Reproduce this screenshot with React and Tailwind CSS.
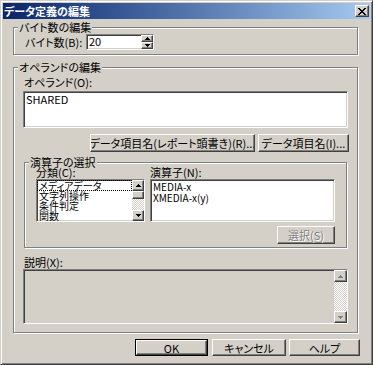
import React from "react";

const sunken =
  "border border-t-[#808080] border-l-[#808080] border-r-white border-b-white shadow-[inset_1px_1px_0_#404040,inset_-1px_-1px_0_#d4d0c8]";
const raised =
  "border border-t-white border-l-white border-r-[#404040] border-b-[#404040] shadow-[inset_-1px_-1px_0_#808080]";
const etched =
  "border border-[#808080] shadow-[inset_1px_1px_0_#fff,1px_1px_0_#fff]";
const dither =
  "[background-image:repeating-conic-gradient(#fff_0%_25%,#d4d0c8_0%_50%)] [background-size:2px_2px]";
const txt = "text-[11px] leading-[12px] whitespace-nowrap";

const Arrow = ({ dir, color = "#000" }) => (
  <svg width="5" height="3" viewBox="0 0 5 3" shapeRendering="crispEdges">
    {dir === "up" ? (
      <path d="M2 0h1v1H2z M1 1h3v1H1z M0 2h5v1H0z" fill={color} />
    ) : (
      <path d="M0 0h5v1H0z M1 1h3v1H1z M2 2h1v1H2z" fill={color} />
    )}
  </svg>
);

const ScrollButton = ({ dir, disabled, className = "" }) => (
  <div className={`${raised} bg-[#d4d0c8] flex items-center justify-center ${className}`}>
    <Arrow dir={dir} color={disabled ? "#808080" : "#000"} />
  </div>
);

const Button = ({ children, className = "", disabled }) => (
  <div
    className={`${raised} bg-[#d4d0c8] flex items-center justify-center overflow-hidden ${txt} ${
      disabled ? "text-[#808080] [text-shadow:1px_1px_0_#fff]" : "text-black"
    } ${className}`}
  >
    {children}
  </div>
);

const GroupLabel = ({ children }) => (
  <span className="absolute -top-[6px] left-[4px] px-[1px] bg-[#d4d0c8] text-[11px] leading-[11px] whitespace-nowrap">
    {children}
  </span>
);

export default function App() {
  return (
    <div className="w-[373px] h-[365px] bg-[#d4d0c8] border border-t-[#d4d0c8] border-l-[#d4d0c8] border-r-[#404040] border-b-[#404040] shadow-[inset_1px_1px_0_#fff,inset_-1px_-1px_0_#808080] p-[2px] text-black [font-family:'Noto_Sans_CJK_JP',sans-serif] [font-feature-settings:'palt'] overflow-hidden">
      {/* Title bar */}
      <div className="h-[16px] flex items-center justify-between bg-linear-to-r from-[#0a246a] to-[#a6caf0] pl-[1px] pr-[1px]">
        <span className="text-white font-bold text-[11px] leading-[12px]">データ定義の編集</span>
        <div className={`${raised} bg-[#d4d0c8] w-[14px] h-[12px] flex items-center justify-center`}>
          <svg width="8" height="7" viewBox="0 0 8 7" shapeRendering="crispEdges">
            <path
              d="M0 0h2v1H0z M6 0h2v1H6z M1 1h2v1H1z M5 1h2v1H5z M2 2h4v1H2z M3 3h2v1H3z M2 4h4v1H2z M1 5h2v1H1z M5 5h2v1H5z M0 6h2v1H0z M6 6h2v1H6z"
              fill="#000"
            />
          </svg>
        </div>
      </div>

      {/* バイト数の編集 */}
      <div className={`relative ml-[10px] mt-[8px] w-[345px] h-[28px] ${etched} pt-[6px] pl-[11px] flex items-start`}>
        <GroupLabel>バイト数の編集</GroupLabel>
        <div className={`w-[61px] h-[16px] flex items-center ${txt}`}>バイト数(B):</div>
        <div className={`${sunken} bg-white w-[68px] h-[16px] flex items-stretch`}>
          <div className={`flex-1 ${txt} pl-[2px]`}>20</div>
          <div className="w-[12px] flex flex-col">
            <ScrollButton dir="up" className="flex-1" />
            <ScrollButton dir="down" className="flex-1" />
          </div>
        </div>
      </div>

      {/* オペランドの編集 */}
      <div className={`relative ml-[10px] mt-[12px] w-[345px] h-[266px] ${etched} pt-[8px]`}>
        <GroupLabel>オペランドの編集</GroupLabel>
        <div className={`ml-[10px] ${txt}`}>オペランド(O):</div>
        <div className={`${sunken} bg-white ml-[9px] mt-[3px] w-[325px] h-[37px] px-[2px] pt-[1px] ${txt}`}>
          SHARED
        </div>

        <div className="flex ml-[76px] mt-[6px] gap-[3px]">
          <Button className="w-[165px] h-[18px]">データ項目名(レポート頭書き)(R)...</Button>
          <Button className="w-[91px] h-[18px]">データ項目名(I)...</Button>
        </div>

        {/* 演算子の選択 */}
        <div className={`relative ml-[10px] mt-[10px] w-[323px] h-[86px] ${etched} pt-[4px] pl-[11px] flex flex-col`}>
          <GroupLabel>演算子の選択</GroupLabel>
          <div className="flex gap-[5px]">
            <div className="w-[109px] flex flex-col">
              <div className="text-[11px] leading-[11px] whitespace-nowrap">分類(C):</div>
              <div className={`${sunken} bg-white mt-[1px] h-[43px] flex`}>
                <div className="flex-1 overflow-hidden text-[10px] leading-[10px] whitespace-nowrap">
                  <div className="h-[11px] leading-[11px] px-[2px] outline-1 outline-dotted outline-black -outline-offset-1">メディアデータ</div>
                  <div className="h-[10px] px-[2px]">文字列操作</div>
                  <div className="h-[10px] px-[2px]">条件判定</div>
                  <div className="h-[8px] px-[2px]">関数</div>
                </div>
                <div className="w-[12px] flex flex-col">
                  <ScrollButton dir="up" className="h-[11px]" />
                  <div className={`${raised} bg-[#d4d0c8] h-[8px]`} />
                  <div className={`${dither} flex-1`} />
                  <ScrollButton dir="down" className="h-[11px]" />
                </div>
              </div>
            </div>
            <div className="w-[185px] flex flex-col">
              <div className="text-[11px] leading-[11px] whitespace-nowrap">演算子(N):</div>
              <div className={`${sunken} bg-white mt-[1px] h-[43px] px-[2px] pt-[1px] text-[10px] leading-[11px]`}>
                <div>MEDIA-x</div>
                <div>XMEDIA-x(y)</div>
              </div>
              <Button disabled className="self-end mt-[4px] w-[58px] h-[18px]">選択(S)</Button>
            </div>
          </div>
        </div>

        <div className={`ml-[10px] mt-[8px] ${txt}`}>説明(X):</div>
        <div className={`${sunken} bg-[#d4d0c8] ml-[9px] mt-[1px] w-[325px] h-[55px] flex justify-end`}>
          <div className="w-[13px] flex flex-col">
            <ScrollButton dir="up" disabled className="h-[12px]" />
            <div className={`${dither} flex-1`} />
            <ScrollButton dir="down" disabled className="h-[12px]" />
          </div>
        </div>
      </div>

      {/* Dialog buttons */}
      <div className="flex ml-[132px] mt-[6px]">
        <div className="border border-black">
          <Button className="w-[71px] h-[15px]">OK</Button>
        </div>
        <Button className="ml-[4px] w-[74px] h-[17px]">キャンセル</Button>
        <Button className="ml-[3px] w-[71px] h-[17px]">ヘルプ</Button>
      </div>
    </div>
  );
}
